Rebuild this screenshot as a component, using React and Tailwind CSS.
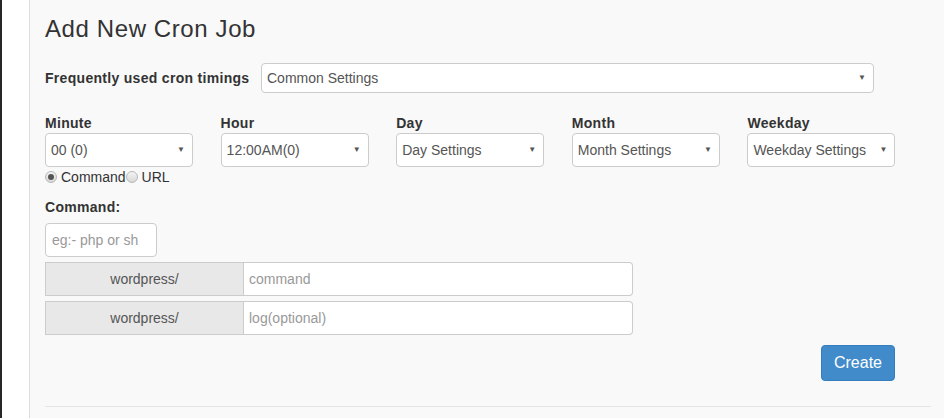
import { useState } from 'react';

const font = { fontFamily: '"Liberation Sans", Arial, Helvetica, sans-serif' };

const columns = [
  { label: 'Minute', value: '00 (0)' },
  { label: 'Hour', value: '12:00AM(0)' },
  { label: 'Day', value: 'Day Settings' },
  { label: 'Month', value: 'Month Settings' },
  { label: 'Weekday', value: 'Weekday Settings' },
];

function FakeSelect({ value, className = '' }) {
  return (
    <div className={`flex items-center justify-between rounded-[4px] border border-[#ccc] bg-white pl-[5px] pr-[7px] ${className}`}>
      <span className="text-[14px] leading-none text-[#555]">{value}</span>
      <span className="text-[8px] leading-none text-[#555]">▼</span>
    </div>
  );
}

function Radio({ checked, onClick }) {
  return (
    <span
      onClick={onClick}
      className="flex h-[12px] w-[12px] shrink-0 items-center justify-center rounded-full border border-[#b8b8b8] bg-gradient-to-b from-[#f4f4f4] to-[#d8d8d8]"
    >
      {checked && <span className="h-[6px] w-[6px] rounded-full bg-[#555]"></span>}
    </span>
  );
}

export default function App() {
  const [mode, setMode] = useState('command');

  return (
    <div className="flex h-[418px] w-[944px] overflow-hidden bg-white text-[#333]" style={font}>
      <div className="w-[2px] shrink-0 bg-[#262626]"></div>
      <div className="w-[27px] shrink-0 bg-white"></div>
      <div className="min-w-0 flex-1 border-l border-[#ddd] bg-[#f9f9f9] px-[15px]">
        <h3 className="mt-[16px] text-[24px] font-normal leading-[26px] tracking-[0.6px] text-[#333]">Add New Cron Job</h3>

        <div className="mt-[21px] flex items-center">
          <label className="w-[216px] shrink-0 text-[14px] font-bold leading-[20px] tracking-[0.3px]">Frequently used cron timings</label>
          <FakeSelect value="Common Settings" className="h-[30px] w-[613px] shrink-0" />
        </div>

        <div className="mt-[20px] grid w-[878px] grid-cols-5">
          {columns.map(col => (
            <div key={col.label}>
              <div className="text-[14px] font-bold leading-[20px] tracking-[0.3px]">{col.label}</div>
              <FakeSelect value={col.value} className="h-[34px] w-[148px]" />
            </div>
          ))}
        </div>

        <div className="flex h-[20px] items-center text-[14px] text-[#333]">
          <Radio checked={mode === 'command'} onClick={() => setMode('command')} />
          <span className="ml-[4px]">Command</span>
          <Radio checked={mode === 'url'} onClick={() => setMode('url')} />
          <span className="ml-[4px]">URL</span>
        </div>

        <div className="mt-[10px] text-[14px] font-bold leading-[20px] tracking-[0.3px]">Command:</div>
        <input
          type="text"
          placeholder="eg:- php or sh"
          className="mt-[6px] block h-[34px] w-[112px] rounded-[4px] border border-[#ccc] bg-white pl-[6px] text-[14px] text-[#555] outline-none placeholder:text-[#999]"
        />

        {['command', 'log(optional)'].map(ph => (
          <div key={ph} className="mt-[5px] flex h-[34px] w-[588px]">
            <div className="flex w-[199px] shrink-0 items-center justify-center border border-[#ccc] bg-[#e8e8e8] text-[14px] text-[#555]">wordpress/</div>
            <input
              type="text"
              placeholder={ph}
              className="min-w-0 flex-1 rounded-r-[4px] border border-l-0 border-[#ccc] bg-white pl-[5px] text-[14px] text-[#555] outline-none placeholder:text-[#999]"
            />
          </div>
        ))}

        <div className="mt-[10px] flex w-[850px] justify-end">
          <button className="h-[36px] w-[74px] rounded-[4px] border border-[#357ebd] bg-[#428bca] text-[16px] text-white">Create</button>
        </div>

        <div className="mt-[25px] h-[1px] w-[886px] bg-[#e5e5e5]"></div>
      </div>
    </div>
  );
}
